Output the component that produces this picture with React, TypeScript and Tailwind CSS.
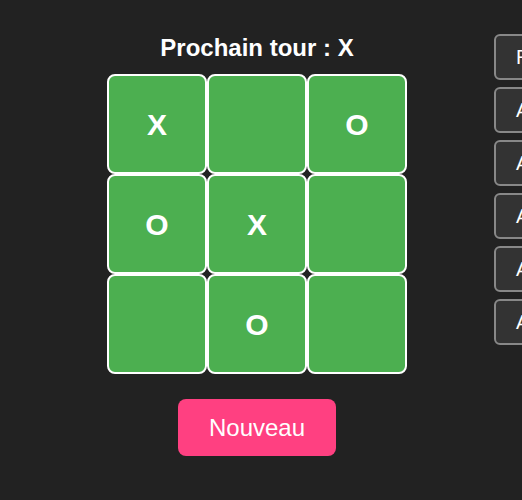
import React from "react";

const cells = ["X", "", "O", "O", "X", "", "", "O", ""];
const moves = ["Revenir au début", "Aller au coup #1", "Aller au coup #2", "Aller au coup #3", "Aller au coup #4", "Aller au coup #5"];

export default function App() {
  return (
    <div
      className="w-[522px] h-[500px] overflow-hidden bg-[#222222] text-white flex pl-5 pt-[34px]"
      style={{ fontFamily: '"Liberation Sans", Arial, sans-serif' }}
    >
      <div className="w-[474px] shrink-0 flex flex-col items-center">
        <h2 className="text-[24px] font-bold leading-[27px] mb-[13px]">Prochain tour : X</h2>
        <div className="grid grid-cols-[100px_100px_100px] grid-rows-[100px_100px_100px]">
          {cells.map((c, i) => (
            <button
              key={i}
              className="w-[100px] h-[100px] bg-[#4caf50] border-2 border-white rounded-[8px] text-[30px] font-bold text-white flex items-center justify-center"
            >
              {c}
            </button>
          ))}
        </div>
        <button className="mt-[25px] bg-[#ff4081] text-white text-[24px] leading-[27px] px-[31px] py-[15px] rounded-[8px]">
          Nouveau
        </button>
      </div>
      <div className="flex flex-col gap-[7px] shrink-0">
        {moves.map((m, i) => (
          <button
            key={i}
            className="h-[46px] whitespace-nowrap bg-[#333333] border-2 border-[#888888] rounded-[6px] px-5 text-[20px] text-white text-left"
          >
            {m}
          </button>
        ))}
      </div>
    </div>
  );
}
